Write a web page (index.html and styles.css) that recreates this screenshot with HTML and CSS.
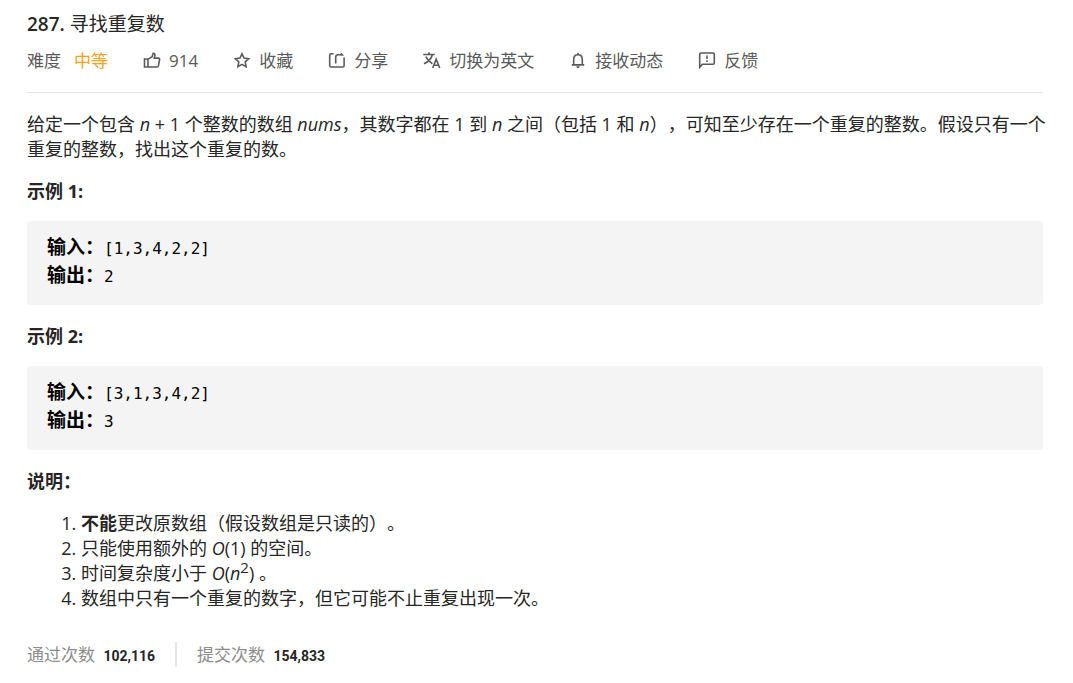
FILE: index.html
```
<!DOCTYPE html>
<html lang="zh-CN">
<head>
	<meta charset="UTF-8">
	<meta name="viewport" content="width=device-width, initial-scale=1.0">
	<title>287. 寻找重复数</title>
	<link rel="stylesheet" href="styles.css">
</head>
<body>
	<header class="question-header">
		<h1 class="title"><b>287.</b> 寻找重复数</h1>
		<div class="toolbar">
			<div class="difficulty">
				<span>难度</span>
				<span class="medium">中等</span>
			</div>
			<button class="tool" type="button">
				<svg class="icon" viewBox="0 0 18 18"><path d="M1.5 7H5v8H1.5zM5 7.1L9 4.9l1.2-3.6c1.3 0 1.9.7 1.7 1.8l-.6 3h4.2c.8 0 1.2.6 1.1 1.4l-1.2 6.2c-.2.9-.7 1.3-1.5 1.3H5"/></svg>
				<span>914</span>
			</button>
			<button class="tool" type="button">
				<svg class="icon" viewBox="0 0 18 18"><path d="M9 1.8l2 4.3 4.7.6-3.5 3.2.9 4.7L9 12.3l-4.1 2.3.9-4.7-3.5-3.2L7 6.1z"/></svg>
				<span>收藏</span>
			</button>
			<button class="tool" type="button">
				<svg class="icon" viewBox="0 0 18 18"><path d="M5.6 1.8H3c-.9 0-1.3.4-1.3 1.3v10.6c0 .9.4 1.3 1.3 1.3h11.8c.9 0 1.3-.4 1.3-1.3V5.5M7.7 11.5V5.3c0-1.7.9-2.5 2.6-2.5h4.5"/><path class="solid" d="M12.8.4l3.4 3.2h-3.4z"/></svg>
				<span>分享</span>
			</button>
			<button class="tool" type="button">
				<svg class="icon" viewBox="0 0 18 18"><path d="M.3 2.5h11.4M6 .3v2.2M2.8 4.6c1.4 3 3.7 5.4 6.6 7.1M9.4 2.5c-.9 4-4 7.2-8.4 9.2M9.7 16l3.5-8.9L16.7 16M10.9 13.2h4.6"/></svg>
				<span>切换为英文</span>
			</button>
			<button class="tool" type="button">
				<svg class="icon" viewBox="0 0 18 18"><path d="M2.8 12.9h12.4M4.7 12.9V7.3c0-2.8 1.6-4.6 4.3-4.6s4.3 1.8 4.3 4.6v5.6M9 2.7V.8"/><path class="solid" d="M7.3 14.3h3.4c0 1.1-.7 1.8-1.7 1.8s-1.7-.7-1.7-1.8z"/></svg>
				<span>接收动态</span>
			</button>
			<button class="tool" type="button">
				<svg class="icon" viewBox="0 0 18 18"><path d="M1.7 15.3V2.2c0-.8.4-1.2 1.2-1.2h12.2c.8 0 1.2.4 1.2 1.2V11c0 .8-.4 1.2-1.2 1.2H4.4zM9 3.5V7M9 8.3V10"/></svg>
				<span>反馈</span>
			</button>
		</div>
	</header>

	<main class="content">
		<p class="description">给定一个包含 <em>n</em> + 1 个整数的数组 <em>nums</em>，其数字都在 1 到 <em>n</em> 之间（包括 1 和 <em>n</em>），可知至少存在一个重复的整数。假设只有一个重复的整数，找出这个重复的数。</p>

		<p><strong>示例 1:</strong></p>
<pre class="example"><strong>输入：</strong>[1,3,4,2,2]
<strong>输出：</strong>2</pre>

		<p><strong>示例 2:</strong></p>
<pre class="example"><strong>输入：</strong>[3,1,3,4,2]
<strong>输出：</strong>3</pre>

		<p><strong>说明：</strong></p>
		<ol class="notes">
			<li><strong>不能</strong>更改原数组（假设数组是只读的）。</li>
			<li>只能使用额外的 <em>O</em>(1) 的空间。</li>
			<li>时间复杂度小于 <em>O</em>(<em>n</em><sup>2</sup>) 。</li>
			<li>数组中只有一个重复的数字，但它可能不止重复出现一次。</li>
		</ol>
	</main>

	<footer class="stats">
		<div class="stat">通过次数 <b>102,116</b></div>
		<div class="stat">提交次数 <b>154,833</b></div>
	</footer>
</body>
</html>
```
FILE: styles.css
```
* {
	box-sizing: border-box;
}
body {
	margin: 0;
	padding: 12px 30px 12px 27px;
	font-family: "Open Sans", "Noto Sans CJK SC", sans-serif;
	font-size: 18px;
	font-weight: 400;
	line-height: 25px;
	color: #262626;
	background: #fff;
	text-spacing-trim: space-all;
}
.question-header {
	padding-bottom: 19px;
	border-bottom: 1px solid #e4e4e4;
}
.title {
	margin: 0 0 11px;
	font-size: 19px;
	font-weight: 400;
	line-height: 25px;
}
.title b {
	font-weight: 600;
}
.toolbar {
	display: flex;
	align-items: center;
	gap: 35px;
	font-size: 17px;
	color: #5a5a5a;
}
.difficulty {
	display: flex;
	gap: 13px;
}
.medium {
	color: #ffa119;
}
.tool {
	display: flex;
	align-items: center;
	gap: 8px;
	padding: 0;
	border: 0;
	background: none;
	font: inherit;
	color: inherit;
	white-space: nowrap;
	cursor: pointer;
}
.icon {
	width: 18px;
	height: 18px;
	fill: none;
	stroke: #5a5a5a;
	stroke-width: 1.6;
}
.icon .solid {
	fill: #5a5a5a;
	stroke: none;
}
.content p {
	margin: 0 0 17px;
}
.content .description {
	margin: 19px -10px 17px 0;
}
strong {
	font-weight: 700;
}
.example {
	margin: 0 0 19px;
	padding: 14px 20px;
	border-radius: 4px;
	background: #f4f4f4;
	font-family: "DejaVu Sans Mono", "Noto Sans CJK SC", monospace;
	font-size: 16px;
	font-weight: 400;
	line-height: 28px;
	color: #000;
	white-space: pre-wrap;
}
.example strong {
	font-size: 19px;
	line-height: 19px;
}
.notes {
	margin: 0;
	padding-left: 54px;
}
sup {
	font-size: 15px;
	line-height: 0;
}
.stats {
	display: flex;
	margin-top: 31px;
	font-size: 17px;
	color: #8c8c8c;
}
.stat b {
	margin-left: 4px;
	font-family: Roboto, sans-serif;
	font-size: 14px;
	font-weight: 700;
	line-height: 14px;
	color: #262626;
}
.stat + .stat {
	margin-left: 20px;
	padding-left: 20px;
	border-left: 2px solid #e4e4e4;
}
```
